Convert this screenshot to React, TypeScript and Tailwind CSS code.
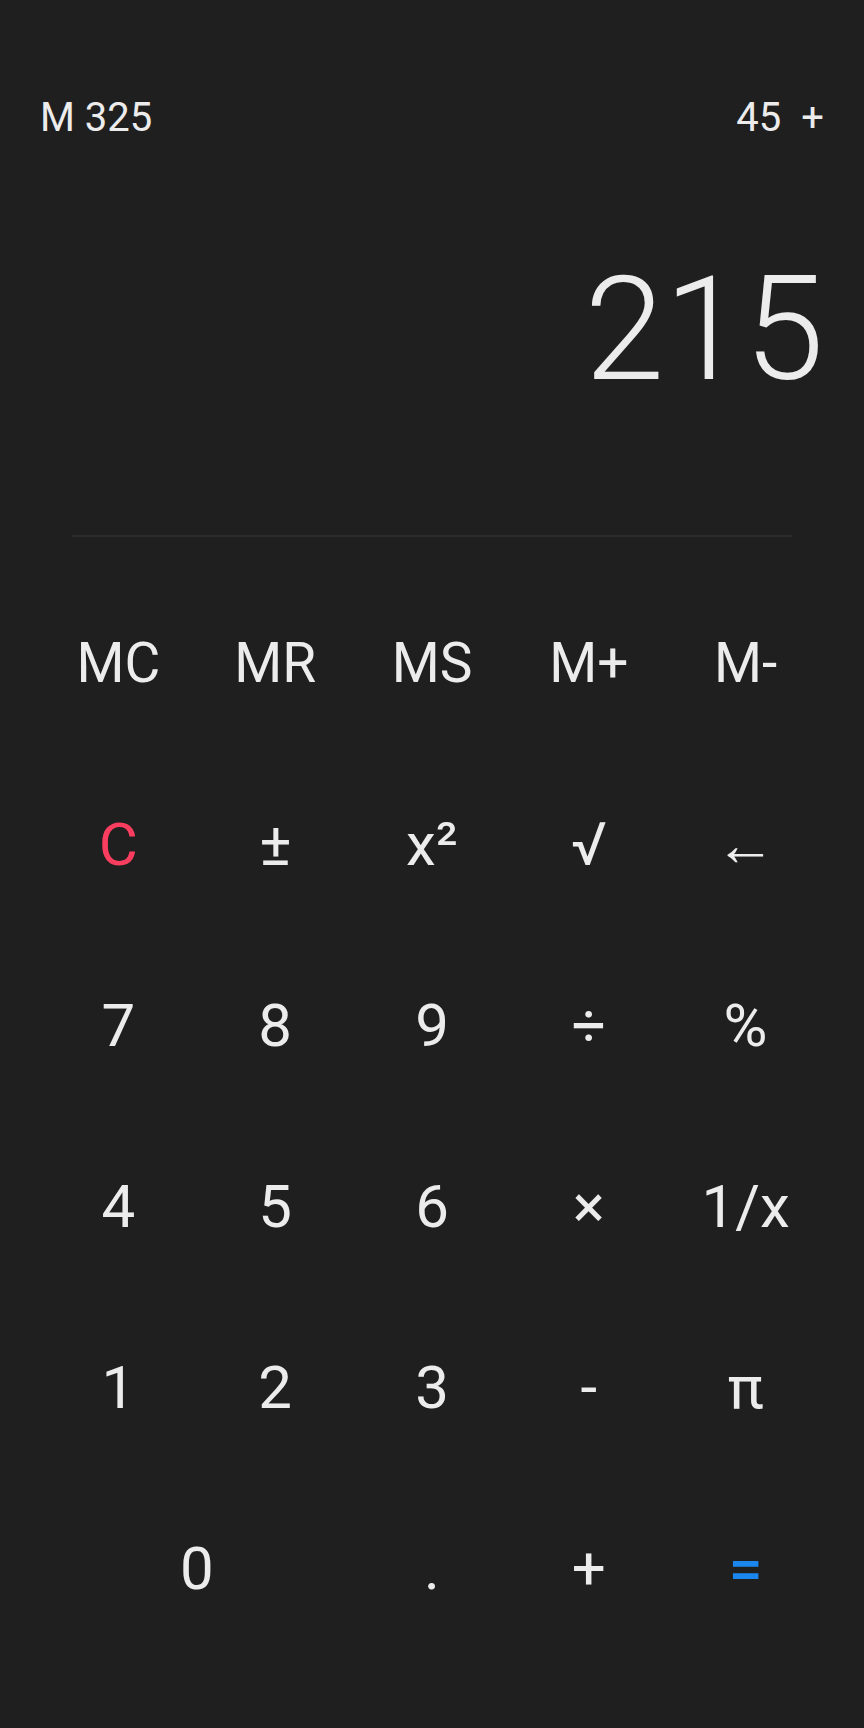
import React from 'react';

type Key = { label: string; color?: string; span?: boolean; bold?: boolean };

const memoryKeys = ['MC', 'MR', 'MS', 'M+', 'M-'];

const keys: Key[] = [
  { label: 'C', color: 'text-[#fb3d60]' },
  { label: '±' },
  { label: 'x²' },
  { label: '√' },
  { label: '←' },
  { label: '7' },
  { label: '8' },
  { label: '9' },
  { label: '÷' },
  { label: '%' },
  { label: '4' },
  { label: '5' },
  { label: '6' },
  { label: '×' },
  { label: '1/x' },
  { label: '1' },
  { label: '2' },
  { label: '3' },
  { label: '-' },
  { label: 'π' },
  { label: '0', span: true },
  { label: '.' },
  { label: '+' },
  { label: '=', color: 'text-[#1b86ee]', bold: true },
];

const App = () => {
  return (
    <div
      className="w-full h-[1728px] bg-[#1f1f1f] text-[#ececec] px-10 overflow-hidden"
      style={{ fontFamily: 'Roboto, "Noto Sans", sans-serif' }}
    >
      {/* memory value + pending operation */}
      <div className="flex justify-between items-start pt-[98px] text-[40px] leading-none">
        <span>M 325</span>
        <div className="flex gap-[20px]">
          <span>45</span>
          <span>+</span>
        </div>
      </div>

      {/* main display */}
      <div className="mt-[120px] text-right text-[144px] font-light leading-none">
        215
      </div>

      <div className="mt-[133px] mx-[32px] h-[2px] bg-[#2c2c2c]" />

      {/* keypad */}
      <div className="mt-[36px] grid grid-cols-5">
        {memoryKeys.map((k) => (
          <button
            key={k}
            className="h-[181px] flex items-center justify-center text-[55px] leading-none"
          >
            {k}
          </button>
        ))}
        {keys.map((k, idx) => (
          <button
            key={idx}
            className={`h-[181px] flex items-center justify-center text-[60px] leading-none ${
              k.span ? 'col-span-2' : ''
            } ${k.color ?? ''} ${k.bold ? 'font-medium' : ''}`}
          >
            {k.label}
          </button>
        ))}
      </div>
    </div>
  );
};

export default App;
